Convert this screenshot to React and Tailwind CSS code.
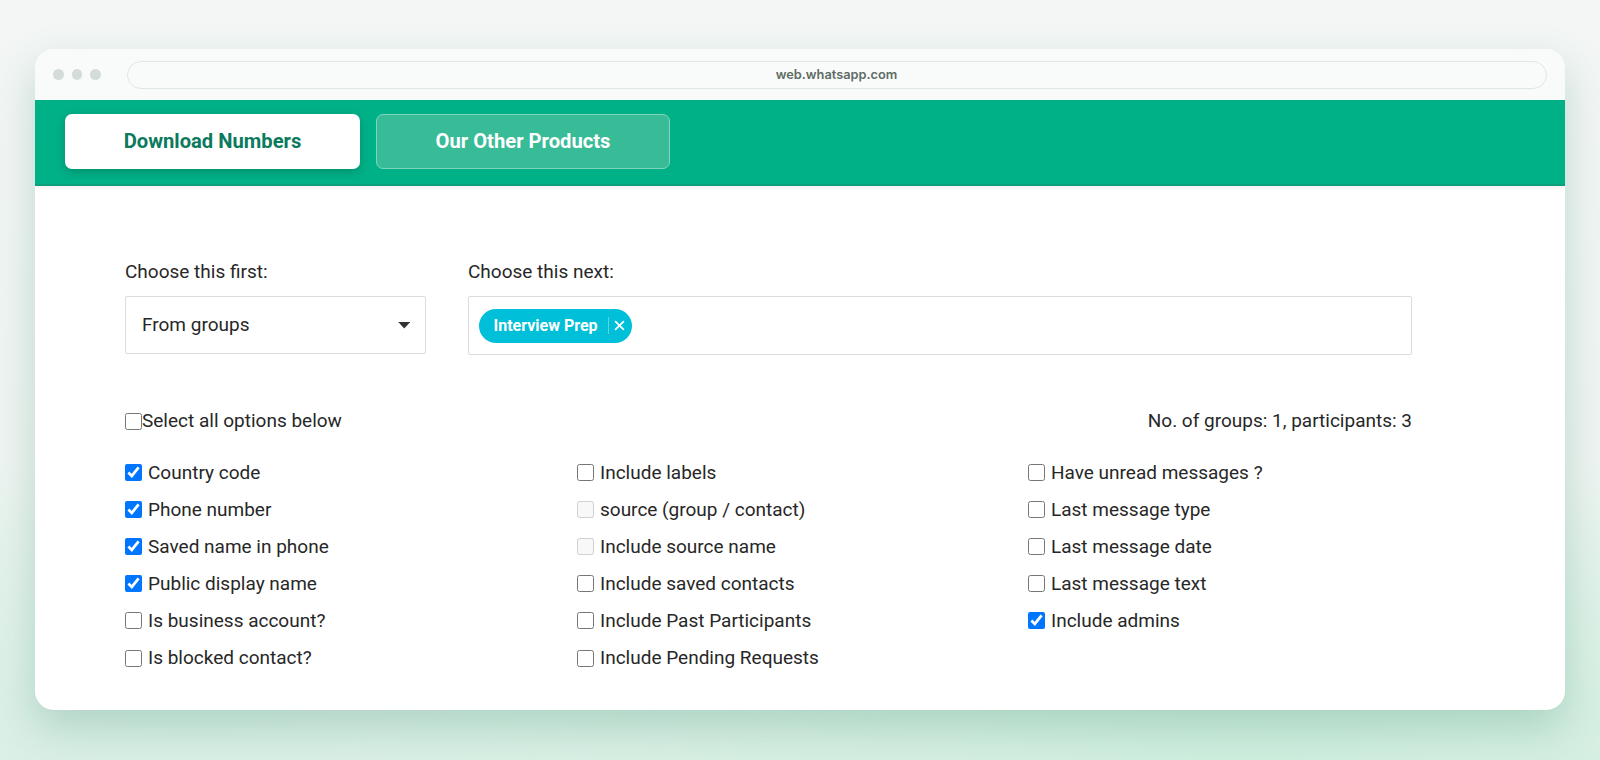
import React from "react";

const col1 = [
  ["Country code", true, false],
  ["Phone number", true, false],
  ["Saved name in phone", true, false],
  ["Public display name", true, false],
  ["Is business account?", false, false],
  ["Is blocked contact?", false, false],
];
const col2 = [
  ["Include labels", false, false],
  ["source (group / contact)", false, true],
  ["Include source name", false, true],
  ["Include saved contacts", false, false],
  ["Include Past Participants", false, false],
  ["Include Pending Requests", false, false],
];
const col3 = [
  ["Have unread messages ?", false, false],
  ["Last message type", false, false],
  ["Last message date", false, false],
  ["Last message text", false, false],
  ["Include admins", true, false],
];

function Row({ label, checked, disabled }) {
  return (
    <label className="flex items-center h-[37.1px] gap-[6px] text-[19px] leading-[24px] text-[#272727]">
      <input
        type="checkbox"
        defaultChecked={checked}
        disabled={disabled}
        className="w-[17px] h-[17px] m-0 accent-[#0075ff]"
      />
      <span>{label}</span>
    </label>
  );
}

function Col({ items }) {
  return (
    <div className="flex flex-col">
      {items.map(([l, c, d]) => (
        <Row key={l} label={l} checked={c} disabled={d} />
      ))}
    </div>
  );
}

export default function App() {
  return (
    <div
      className="w-[1600px] h-[760px] overflow-hidden pt-[49px] pl-[35px]"
      style={{
        background:
          "radial-gradient(ellipse 900px 300px at 1250px 760px, #cfeede 0%, rgba(207,238,222,0) 100%), radial-gradient(ellipse 700px 300px at 200px 760px, #d9efe5 0%, rgba(217,239,229,0) 100%), linear-gradient(180deg, #f3f6f5 0%, #eef4f1 60%, #dff1e8 100%)",
        fontFamily: "Roboto, 'Noto Sans', sans-serif",
      }}
    >
      <div className="w-[1530px] h-[661px] bg-white rounded-[19px] overflow-hidden shadow-[0_18px_40px_rgba(60,140,110,0.28)] flex flex-col">
        {/* title bar */}
        <div className="h-[51px] shrink-0 bg-[#f9fbfa] flex items-center px-[18px]">
          <div className="flex gap-[8px]">
            <span className="w-[10.5px] h-[10.5px] rounded-full bg-[#d3dcd8]" />
            <span className="w-[10.5px] h-[10.5px] rounded-full bg-[#d3dcd8]" />
            <span className="w-[10.5px] h-[10.5px] rounded-full bg-[#d3dcd8]" />
          </div>
          <div className="ml-[26px] w-[1420px] h-[28px] rounded-full border border-[#dde7e4] bg-[#f9fbfa] flex items-center justify-center">
            <span
              className="text-[12.8px] font-semibold text-[#5f6b66]"
              style={{ fontFamily: "Inter, 'Liberation Sans', sans-serif" }}
            >
              web.whatsapp.com
            </span>
          </div>
        </div>
        {/* green header */}
        <div className="h-[86px] shrink-0 bg-[#00b087] border-b-2 border-[#0d9f7b] flex items-start pt-[14px] pl-[30px] gap-[16px] shadow-[0_2px_4px_rgba(0,0,0,0.06)]">
          <button className="w-[295px] h-[55px] bg-white rounded-[7px] text-[20.2px] font-bold text-[#0b7a5d] shadow-[0_3px_8px_rgba(0,0,0,0.18)]">
            Download Numbers
          </button>
          <button className="w-[294px] h-[55px] bg-[#38bb97] rounded-[7px] border border-[#7fd6bd] text-[20.2px] font-bold text-white">
            Our Other Products
          </button>
        </div>
        {/* content */}
        <div className="pl-[90px] pr-[153px] pt-[75px]">
          <div className="flex gap-[42px]">
            <div className="w-[301px] flex flex-col">
              <div className="text-[19px] text-[#272727] leading-[22px] mb-[13px]">Choose this first:</div>
              <div className="h-[58px] border border-[#dcdcdc] rounded-[2px] flex items-center pl-[16px] pr-[15px] justify-between">
                <span className="text-[19px] text-[#272727]">From groups</span>
                <svg width="12.5" height="7" viewBox="0 0 12 7">
                  <path d="M0 0 L12 0 L6 6.5 Z" fill="#333" />
                </svg>
              </div>
            </div>
            <div className="flex-1 flex flex-col">
              <div className="text-[19px] text-[#272727] leading-[22px] mb-[13px]">Choose this next:</div>
              <div className="h-[59px] border border-[#dcdcdc] rounded-[2px] flex items-center pl-[10px]">
                <div className="h-[34px] w-[153px] rounded-full bg-[#00bfd8] flex items-center pl-[14.5px] text-white">
                  <span className="text-[16px] font-bold">Interview Prep</span>
                  <span className="ml-[10px] w-px h-[17px] bg-[#5fd3e4]" />
                  <svg className="ml-[5px]" width="11" height="11" viewBox="0 0 10 10">
                    <path d="M1 1 L9 9 M9 1 L1 9" stroke="white" strokeWidth="1.5" />
                  </svg>
                </div>
              </div>
            </div>
          </div>

          <div className="mt-[54px] flex items-center justify-between h-[24px]">
            <label className="flex items-center text-[19px] text-[#272727]">
              <input type="checkbox" className="w-[17px] h-[17px] m-0 accent-[#0075ff]" />
              <span>Select all options below</span>
            </label>
            <span className="text-[19px] text-[#272727]">No. of groups: 1, participants: 3</span>
          </div>

          <div className="mt-[21px] grid grid-cols-[452px_451px_1fr]">
            <Col items={col1} />
            <Col items={col2} />
            <Col items={col3} />
          </div>
        </div>
      </div>
    </div>
  );
}
